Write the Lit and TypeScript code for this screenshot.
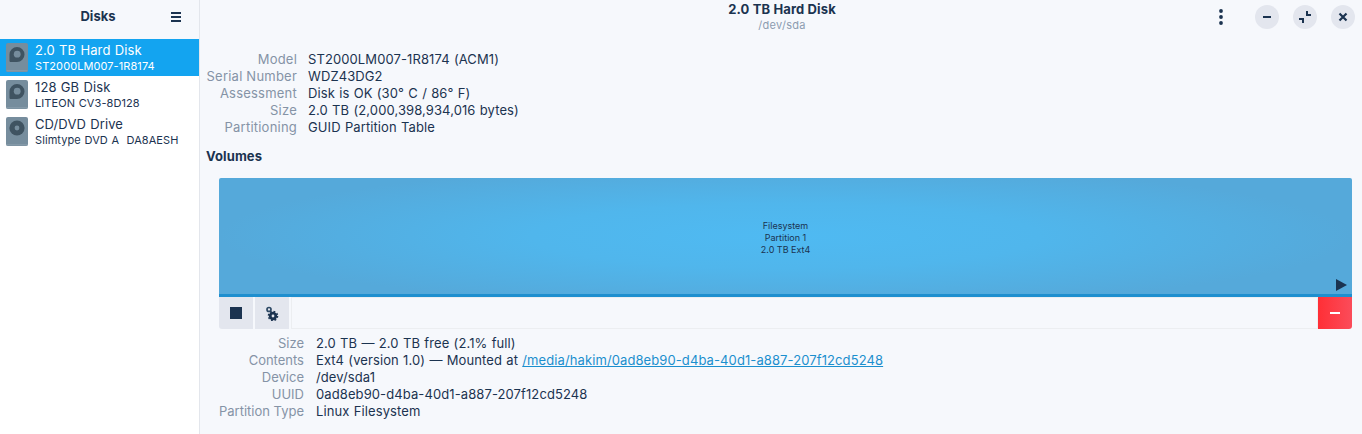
import { LitElement, html, css, svg } from "lit";
import { customElement } from "lit/decorators.js";

const disk = (kind: "hdd" | "cd") => html`<svg class="dicon" width="22" height="29" viewBox="0 0 22 29">
  <rect x="0" y="0" width="22" height="29" rx="2" fill="#768d9d"></rect>
  <rect x="0.5" y="27" width="21" height="1.5" fill="#8499a8"></rect>
  ${kind === "hdd"
    ? svg`<path d="M11 4a7.5 7.5 0 0 1 0 15H4.2l-.7-.8V11.5A7.5 7.5 0 0 1 11 4z" fill="#3f5361"></path><circle cx="11.2" cy="11.2" r="3.4" fill="#768d9d"></circle>`
    : svg`<circle cx="11" cy="11" r="7.6" fill="#3f5361"></circle><circle cx="11" cy="11" r="2.4" fill="#768d9d"></circle>`}
</svg>`;

@customElement("app-root")
export class AppRoot extends LitElement {
  static styles = css`
    :host { display: block; width: 1362px; height: 434px; overflow: hidden; font-family: Inter, "Noto Sans", sans-serif; color: #1b3350; font-size: 13px; background: #f6f8fc; }
    .app { display: flex; height: 434px; }
    .side { width: 199px; border-right: 1px solid #e3e6ec; display: flex; flex-direction: column; background: #fff; flex: none; }
    .side-head { height: 39px; background: #f6f8fc; position: relative; display: flex; align-items: center; justify-content: center; box-sizing: border-box; padding: 0 3px 8px 0; font-weight: 700; font-size: 13px; }
    .burger { position: absolute; left: 171px; top: 12px; }
    .row { height: 37px; display: flex; align-items: center; padding-left: 6px; gap: 7px; box-sizing: border-box; }
    .row.sel { background: #13a4f0; color: #fff; }
    .row .t { font-size: 13px; line-height: 15px; letter-spacing: 0.1px; word-spacing: 0.5px; }
    .row .s { font-size: 11px; line-height: 14px; margin-top: 1px; letter-spacing: 0.08px; word-spacing: 0.5px; white-space: pre; }
    .dicon { flex: none; }
    .main { flex: 1; display: flex; flex-direction: column; min-width: 0; }
    .head { height: 39px; display: flex; position: relative; justify-content: center; flex: none; }
    .title { text-align: center; padding: 1px 0 0 2px; }
    .title .a { font-weight: 700; font-size: 13px; line-height: 17px; letter-spacing: 0.13px; }
    .title .b { font-size: 11px; line-height: 15px; color: #8c9cb0; letter-spacing: 0.3px; }
    .actions { position: absolute; right: 7px; top: 5px; display: flex; align-items: center; gap: 14px; }
    .kebab { width: 24px; height: 24px; display: flex; align-items: center; justify-content: center; margin-right: 8px; }
    .wbtn { width: 24px; height: 24px; border-radius: 50%; background: #e3e6ee; display: flex; align-items: center; justify-content: center; }
    .info { padding: 12px 0 0 6px; }
    .kv { display: grid; row-gap: 0; column-gap: 11px; align-items: center; line-height: 17px; }
    .kv .k { text-align: right; color: #8593a6; white-space: nowrap; }
    .kv .v { white-space: nowrap; letter-spacing: 0.1px; word-spacing: 0.5px; }
    .top { grid-template-columns: 91px auto; justify-content: start; }
    .top .k { letter-spacing: 0.22px; }
    .vol-h { font-weight: 700; margin: 12px 0 0; line-height: 17px; letter-spacing: 0.1px; }
    .vol-wrap { margin: 13px 10px 0 13px; }
    .bar { height: 119px; border-radius: 2px 2px 0 0; box-sizing: border-box; border-bottom: 3px solid #1e8fcf;
      background: radial-gradient(ellipse 50% 62% at 50% 50%, #4fbaf2 0%, #50b6ec 45%, #55a9da 100%);
      position: relative; display: flex; align-items: center; justify-content: center; text-align: center;
      font-size: 9px; line-height: 12px; color: #1b3350; }
    .bar .txt { padding-top: 4px; }
    .play { position: absolute; right: 5px; bottom: 3px; }
    .tools { display: flex; height: 32px; }
    .tb { width: 34px; background: #e3e6ee; display: flex; align-items: center; justify-content: center; margin-right: 2px; box-sizing: border-box; flex: none; }
    .tb.first { border-bottom-left-radius: 3px; }
    .fill { flex: 1; border: 1px solid #eceef1; box-sizing: border-box; }
    .del { width: 34px; flex: none; background: linear-gradient(90deg, #ff2f36, #fb4c5a); border-bottom-right-radius: 3px; display: flex; align-items: center; justify-content: center; }
    .bottom { grid-template-columns: 98px auto; justify-content: start; margin: 6px 0 0 0; column-gap: 12px; }
    a { color: #1b8fce; text-decoration: underline; }
  `;

  renderRow(t: string, s: string, kind: "hdd" | "cd", sel = false) {
    return html`<div class="row ${sel ? "sel" : ""}">${disk(kind)}<div><div class="t">${t}</div><div class="s">${s}</div></div></div>`;
  }

  render() {
    const top = [
      ["Model", "ST2000LM007-1R8174 (ACM1)"],
      ["Serial Number", "WDZ43DG2"],
      ["Assessment", "Disk is OK (30° C / 86° F)"],
      ["Size", "2.0 TB (2,000,398,934,016 bytes)"],
      ["Partitioning", "GUID Partition Table"],
    ];
    return html`<div class="app">
      <div class="side">
        <div class="side-head">Disks
          <svg class="burger" width="10" height="10" viewBox="0 0 10 10"><path d="M0 0h10v2H0zM0 4h10v2H0zM0 8h10v2H0z" fill="#1b3350"></path></svg>
        </div>
        ${this.renderRow("2.0 TB Hard Disk", "ST2000LM007-1R8174", "hdd", true)}
        ${this.renderRow("128 GB Disk", "LITEON CV3-8D128", "hdd")}
        ${this.renderRow("CD/DVD Drive", "Slimtype DVD A  DA8AESH", "cd")}
      </div>
      <div class="main">
        <div class="head">
          <div class="title"><div class="a">2.0 TB Hard Disk</div><div class="b">/dev/sda</div></div>
          <div class="actions">
            <div class="kebab"><svg width="4" height="16" viewBox="0 0 4 16"><circle cx="2" cy="2" r="1.9" fill="#1b3350"></circle><circle cx="2" cy="8" r="1.9" fill="#1b3350"></circle><circle cx="2" cy="14" r="1.9" fill="#1b3350"></circle></svg></div>
            <div class="wbtn"><svg width="8" height="2" viewBox="0 0 8 2"><rect width="8" height="2" fill="#1b3350"></rect></svg></div>
            <div class="wbtn"><svg width="12" height="12" viewBox="0 0 12 12"><path d="M7 0h2v3h3v2H7zM0 7h5v5H3V9H0z" fill="#1b3350"></path></svg></div>
            <div class="wbtn"><svg width="10" height="10" viewBox="0 0 10 10"><path d="M1.5 1.5l7 7M8.5 1.5l-7 7" stroke="#1b3350" stroke-width="2.2" fill="none"></path></svg></div>
          </div>
        </div>
        <div class="info">
          <div class="kv top">${top.map(([k, v]) => html`<div class="k">${k}</div><div class="v">${v}</div>`)}</div>
          <div class="vol-h">Volumes</div>
          <div class="vol-wrap">
            <div class="bar">
              <div class="txt">Filesystem<br />Partition 1<br />2.0 TB Ext4</div>
              <svg class="play" width="11" height="12" viewBox="0 0 11 12"><path d="M0 0l11 6-11 6z" fill="#1b3350"></path></svg>
            </div>
            <div class="tools">
              <div class="tb first"><svg width="12" height="12" viewBox="0 0 12 12"><rect width="12" height="12" fill="#1b3350"></rect></svg></div>
              <div class="tb"><svg width="14" height="15" viewBox="0 0 14 15"><circle cx="4" cy="3.5" r="2" fill="none" stroke="#2f4a66" stroke-width="1.7"></circle><circle cx="8" cy="10" r="2.8" fill="none" stroke="#1b3350" stroke-width="2.8"></circle><circle cx="8" cy="10" r="4.6" fill="none" stroke="#1b3350" stroke-width="1.4" stroke-dasharray="1.8 1.81"></circle></svg></div>
              <div class="fill"></div>
              <div class="del"><svg width="10" height="2" viewBox="0 0 10 2"><rect width="10" height="2" fill="#fff"></rect></svg></div>
            </div>
          </div>
          <div class="kv bottom">
            <div class="k">Size</div><div class="v">2.0 TB — 2.0 TB free (2.1% full)</div>
            <div class="k">Contents</div><div class="v">Ext4 (version 1.0) — Mounted at <a href="#">/media/hakim/0ad8eb90-d4ba-40d1-a887-207f12cd5248</a></div>
            <div class="k">Device</div><div class="v">/dev/sda1</div>
            <div class="k">UUID</div><div class="v">0ad8eb90-d4ba-40d1-a887-207f12cd5248</div>
            <div class="k">Partition Type</div><div class="v">Linux Filesystem</div>
          </div>
        </div>
      </div>
    </div>`;
  }
}
